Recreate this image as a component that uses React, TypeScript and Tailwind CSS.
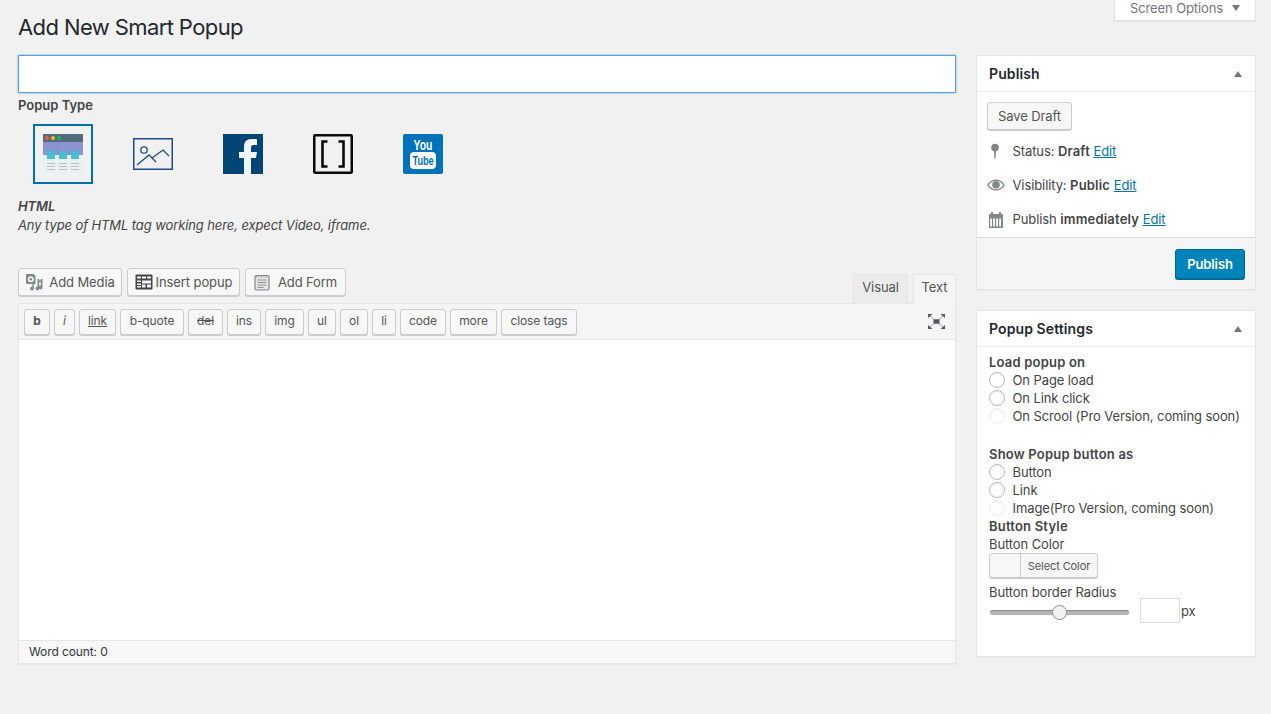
import React from "react";

const Btn = ({ children, className = "" }: { children: React.ReactNode; className?: string }) => (
  <button className={"flex items-center justify-center rounded-[3px] border border-[#cccccc] bg-[#f7f7f7] text-[#555555] shadow-[0_1px_0_#cccccc] " + className}>
    {children}
  </button>
);

const HtmlIcon = () => (
  <svg width="40" height="40" viewBox="0 0 40 40">
    <rect y="0" width="40" height="40" fill="#eaf1f2" />
    <rect width="40" height="8" fill="#4f6b7c" />
    <rect y="8" width="40" height="13" fill="#8a92cf" />
    <circle cx="4" cy="4" r="2" fill="#ee5f50" />
    <circle cx="10" cy="4" r="2" fill="#f5bd12" />
    <circle cx="16" cy="4" r="2" fill="#1cb868" />
    {[4, 16, 28].map((x) => (
      <g key={x}>
        <rect x={x} y="17" width="8" height="8" fill="#45bdd3" />
        <rect x={x} y="29" width="8" height="1" fill="#b9c0c4" />
        <rect x={x} y="32" width="8" height="1" fill="#b9c0c4" />
        <rect x={x} y="35" width="8" height="1" fill="#b9c0c4" />
      </g>
    ))}
  </svg>
);

const ImageIcon = () => (
  <svg width="40" height="40" viewBox="0 0 40 40" fill="none" stroke="#1f4b87">
    <rect x="0.750" y="4.750" width="38.500" height="30.500" strokeWidth="1.500" />
    <circle cx="11" cy="16" r="3.200" strokeWidth="1.300" />
    <path d="M4 31 L16 21 L23 28 M19 24 L30 16 L36 22" strokeWidth="1.300" />
  </svg>
);

const FbIcon = () => (
  <svg width="40" height="40" viewBox="0 0 40 40">
    <rect width="40" height="40" fill="#004576" />
    <path d="M21 40V24h-5v-6h5v-5c0-6 3-8 8-8 2 0 4 0 5 .3V11h-3c-2.500 0-3 1.200-3 3v4h6l-1 6h-5v16z" fill="#f1f5f8" />
  </svg>
);

const BracketIcon = () => (
  <svg width="40" height="40" viewBox="0 0 40 40" fill="none" stroke="#0a0a0a">
    <rect x="1.250" y="1.250" width="37.500" height="37.500" rx="1" strokeWidth="2.500" />
    <path d="M14.500 7.500H9.500v25h5M25.500 7.500h5v25h-5" strokeWidth="2.600" />
  </svg>
);

const YtIcon = () => (
  <svg width="40" height="40" viewBox="0 0 40 40">
    <rect width="40" height="40" rx="2" fill="#0072b9" />
    <text transform="translate(20 16) scale(0.7 1)" textAnchor="middle" fontSize="15" fontWeight="700" fontFamily="Liberation Sans, sans-serif" fill="#fff">You</text>
    <rect x="7" y="18" width="26" height="17" rx="4" fill="#fff" />
    <text transform="translate(20 31) scale(0.68 1)" textAnchor="middle" fontSize="13.500" fontWeight="700" fontFamily="Liberation Sans, sans-serif" fill="#0072b9">Tube</text>
  </svg>
);

const MediaIcon = () => (
  <svg width="18" height="18" viewBox="0 0 18 18" fill="#82878c">
    <path d="M2 1h6.500l2 2v8H2a1 1 0 0 1-1-1V2a1 1 0 0 1 1-1zM5.800 3.200a3 3 0 1 0 0 6 3 3 0 0 0 0-6z" fillRule="evenodd" />
    <circle cx="5.800" cy="6.200" r="1.300" />
    <path d="M12.500 6h1.700v1.500h1.600V6H17.500v8.500a1.900 1.900 0 1 1-1.700-1.900V9h-1.600v6.500a1.900 1.900 0 1 1-1.700-1.900z" />
    <circle cx="7" cy="15.500" r="1.900" />
    <rect x="7.400" y="11" width="1.500" height="4.500" />
  </svg>
);

const TableIcon = () => (
  <svg width="18" height="16" viewBox="0 0 18 16">
    <rect x="0.500" y="0.500" width="17" height="15" rx="1" fill="#444" />
    {[2, 7, 12].map((x) => <rect key={x} x={x} y="2.500" width="4" height="2" fill="#f7f7f7" />)}
    <rect x="2" y="6.500" width="4" height="1.500" fill="#f7f7f7" />
    <rect x="2" y="9.500" width="4" height="1.500" fill="#f7f7f7" />
    <rect x="2" y="12" width="4" height="1.500" fill="#f7f7f7" />
    <rect x="7" y="6.500" width="9" height="3" fill="#f7f7f7" />
    <rect x="7" y="10.500" width="3.500" height="3" fill="#f7f7f7" />
    <rect x="12" y="10.500" width="4" height="3" fill="#f7f7f7" />
  </svg>
);

const FormIcon = () => (
  <svg width="16" height="17" viewBox="0 0 16 17" fill="none" stroke="#82878c">
    <rect x="1" y="1.500" width="14" height="14.500" rx="1.500" fill="#e6e6e6" strokeWidth="1.200" />
    <path d="M2.500 1v2.500M5 1v2.500M7.500 1v2.500M10 1v2.500M12.500 1v2.500" strokeWidth="0.800" />
    <path d="M3.500 6h9M3.500 8.500h9M3.500 11h9M3.500 13.500h6" strokeWidth="0.900" />
  </svg>
);

const Pin = () => (
  <svg width="12" height="16" viewBox="0 0 12 16" fill="#82878c">
    <circle cx="6" cy="4.500" r="3.800" />
    <path d="M5 7h2l-.4 8.500h-1.200z" />
  </svg>
);

const Eye = () => (
  <svg width="18" height="12" viewBox="0 0 18 12" fill="#82878c">
    <path d="M9 .5C5 .5 1.800 3 .2 6 1.800 9 5 11.500 9 11.500S16.200 9 17.800 6C16.200 3 13 .5 9 .5zm0 1.200c3 0 5.600 1.800 7.200 4.300-1.600 2.500-4.200 4.300-7.200 4.300S3.400 8.500 1.800 6C3.400 3.500 6 1.700 9 1.700z" />
    <circle cx="9" cy="5.800" r="3.800" />
  </svg>
);

const Calendar = () => (
  <svg width="16" height="17" viewBox="0 0 16 17" fill="#82878c">
    <path d="M1 3h2V1h2v2h6V1h2v2h2v14H1zm1.200 4.500v8h1.800v-8zm3 0v8H7v-8zm3 0v8h1.800v-8zm3 0v8h1.800v-8z" fillRule="evenodd" />
  </svg>
);

const Expand = () => (
  <svg width="17" height="15" viewBox="0 0 17 15" fill="#50575e">
    <path d="M2 2l13 11M15 2L2 13" stroke="#a0a5aa" strokeWidth="1" />
    <rect x="5.500" y="5.300" width="6" height="4.400" />
    <path d="M0 0h4.500L0 4zM17 0h-4.500L17 4zM0 15h4.500L0 11zM17 15h-4.500L17 11z" />
  </svg>
);

const Radio = ({ label, faded }: { label: string; faded?: boolean }) => (
  <div className="flex h-[18px] items-center">
    <span className={"h-4 w-4 shrink-0 rounded-full border bg-white shadow-[inset_0_1px_2px_rgba(0,0,0,0.07)] " + (faded ? "border-[#ededed]" : "border-[#b4b9be]")} />
    <span className="ml-[7.500px] whitespace-nowrap">{label}</span>
  </div>
);

const Caret = () => <span className="h-0 w-0 border-x-[4px] border-b-[6px] border-x-transparent border-b-[#72777c]" />;

const Card = ({ title, children, className = "" }: { title: string; children: React.ReactNode; className?: string }) => (
  <div className={"border border-[#e5e5e5] bg-white shadow-[0_1px_1px_rgba(0,0,0,0.04)] " + className}>
    <div className="flex h-[36px] items-center justify-between border-b border-[#eeeeee] pl-3 pr-[13px]">
      <h2 className="text-[14px] font-semibold tracking-[0.1px] text-[#23282d]">{title}</h2>
      <Caret />
    </div>
    {children}
  </div>
);

const toolbar: [string, string, string?][] = [
  ["b", "w-[26px]", "font-bold"],
  ["i", "w-[21px]", "italic"],
  ["link", "w-[37px]", "underline"],
  ["b-quote", "w-[64px]"],
  ["del", "w-[35px]", "line-through"],
  ["ins", "w-[34px]"],
  ["img", "w-[39px]"],
  ["ul", "w-[28px]"],
  ["ol", "w-[28px]"],
  ["li", "w-[24px]"],
  ["code", "w-[46px]"],
  ["more", "w-[47px]"],
  ["close tags", "w-[76px]"],
];

export default function App() {
  return (
    <div className="flex h-[714px] w-full gap-5 overflow-hidden bg-[#f1f1f1] pl-[18px] pr-[15px] font-['Inter',sans-serif] text-[13px] leading-[18px] tracking-[-0.1px] text-[#444444]">
      <main className="w-[938px] shrink-0">
        <h1 className="flex h-[55px] items-center pb-[2px] text-[22px] font-normal tracking-[-0.6px] text-[#23282d]">Add New Smart Popup</h1>
        <div className="h-[38px] rounded-[1px] border border-[#5b9dd9] bg-white shadow-[0_0_2px_rgba(30,140,190,0.8)]" />
        <div className="mt-[3px] font-semibold tracking-[0px]">Popup Type</div>
        <div className="ml-[15px] mt-[10px] flex gap-[30px]">
          <div className="flex h-[60px] w-[60px] items-center justify-center border-2 border-[#0073aa]"><HtmlIcon /></div>
          <div className="flex h-[60px] w-[60px] items-center justify-center"><ImageIcon /></div>
          <div className="flex h-[60px] w-[60px] items-center justify-center"><FbIcon /></div>
          <div className="flex h-[60px] w-[60px] items-center justify-center"><BracketIcon /></div>
          <div className="flex h-[60px] w-[60px] items-center justify-center"><YtIcon /></div>
        </div>
        <div className="mt-[13px] font-semibold italic">HTML</div>
        <div className="mt-[1px] italic">Any type of HTML tag working here, expect Video, iframe.</div>
        <div className="mt-[34px] flex items-end justify-between">
          <div className="mb-[7px] flex gap-[5px]">
            <Btn className="h-[28px] w-[104px] gap-[6px]"><MediaIcon />Add Media</Btn>
            <Btn className="h-[28px] w-[113px] gap-[3px]"><TableIcon />Insert popup</Btn>
            <Btn className="h-[28px] w-[101px] gap-[8px]"><FormIcon />Add Form</Btn>
          </div>
          <div className="flex gap-[5px]">
            <div className="mb-[-1px] flex h-[30px] w-[55px] items-center justify-center border border-b-0 border-[#e5e5e5] bg-[#ebebeb] pb-[5px] text-[#555555]">Visual</div>
            <div className="mb-[-1px] flex h-[30px] w-[43px] items-center justify-center border border-b-0 border-[#e5e5e5] bg-[#f5f5f5] pb-[5px] text-[#555555]">Text</div>
          </div>
        </div>
        <div className="border border-[#e5e5e5] shadow-[0_1px_1px_rgba(0,0,0,0.04)]">
          <div className="flex h-[36px] items-center justify-between border-b border-[#e5e5e5] bg-[#f5f5f5] pl-[5px] pr-[10px]">
            <div className="flex gap-1">
              {toolbar.map(([label, w, style]) => (
                <Btn key={label} className={"h-[26px] pb-[1px] text-[12px] " + w + " " + (style ?? "")}>{label}</Btn>
              ))}
            </div>
            <Expand />
          </div>
          <div className="h-[300px] bg-white" />
          <div className="flex h-[23px] items-center border-t border-[#e5e5e5] bg-[#f7f7f7] pl-[10px] text-[12px] text-[#32373c]">Word count: 0</div>
        </div>
      </main>
      <aside className="w-[280px] shrink-0">
        <div className="flex justify-end">
          <div className="flex h-[21px] w-[142px] items-center justify-center gap-[9px] border border-t-0 border-[#e1e1e1] bg-white pb-[4px] text-[#72777c] shadow-[0_1px_1px_rgba(0,0,0,0.04)]">
            Screen Options
            <span className="h-0 w-0 border-x-[4px] border-t-[6px] border-x-transparent border-t-[#72777c]" />
          </div>
        </div>
        <Card title="Publish" className="mt-[34px]">
          <div className="h-[145px] px-[10px] pt-[10px]">
            <Btn className="h-[28px] w-[85px]">Save Draft</Btn>
            <div className="mt-[12px] flex h-[18px] items-center"><span className="flex w-[15px] justify-center"><Pin /></span><span className="ml-[10.500px]">Status: <b className="font-semibold tracking-[0.2px]">Draft</b> <a className="text-[#0073aa] underline">Edit</a></span></div>
            <div className="mt-[16px] flex h-[18px] items-center"><span className="flex w-[18px] justify-center"><Eye /></span><span className="ml-[7.500px]">Visibility: <b className="font-semibold tracking-[0.2px]">Public</b> <a className="text-[#0073aa] underline">Edit</a></span></div>
            <div className="mt-[16px] flex h-[18px] items-center"><span className="flex w-[18px] justify-center"><Calendar /></span><span className="ml-[7.500px]">Publish <b className="font-semibold tracking-[0.2px]">immediately</b> <a className="text-[#0073aa] underline">Edit</a></span></div>
          </div>
          <div className="flex h-[52px] items-center justify-end border-t border-[#dddddd] bg-[#f5f5f5] pr-[10px]">
            <button className="h-[30px] w-[70px] rounded-[3px] border border-[#006799] bg-[#0085ba] font-semibold text-white shadow-[0_1px_0_#006799]">Publish</button>
          </div>
        </Card>
        <Card title="Popup Settings" className="mt-[20px] h-[347px]">
          <div className="px-3 pt-[6px]">
            <div className="font-semibold tracking-[0.2px]">Load popup on</div>
            <Radio label="On Page load" />
            <Radio label="On Link click" />
            <Radio label="On Scrool (Pro Version, coming soon)" faded />
            <div className="mt-[20px] font-semibold tracking-[0.2px]">Show Popup button as</div>
            <Radio label="Button" />
            <Radio label="Link" />
            <Radio label="Image(Pro Version, coming soon)" faded />
            <div className="font-semibold tracking-[0.2px]">Button Style</div>
            <div>Button Color</div>
            <div className="flex h-[25px] w-[109px] rounded-[3px] border border-[#cccccc] bg-[#f7f7f7] text-[11px] text-[#555555] shadow-[0_1px_0_#cccccc]">
              <span className="w-[31px] border-r border-[#cccccc]" />
              <span className="flex flex-1 items-center justify-center">Select Color</span>
            </div>
            <div className="mt-[5px]">Button border Radius</div>
            <div className="mt-[-3px] flex items-center">
              <div className="relative ml-[1px] mt-[4px] h-[5px] w-[139px] rounded-full bg-[#b5b5b5] shadow-[inset_0_1px_1px_rgba(0,0,0,0.25)]">
                <span className="absolute left-[62px] top-[-5px] h-[15px] w-[15px] rounded-full border border-[#8e8e8e] bg-[#f2f2f2]" />
              </div>
              <div className="ml-[11px] h-[25px] w-[40px] border border-[#dddddd] bg-white" />
              <span className="ml-[1px]">px</span>
            </div>
          </div>
        </Card>
      </aside>
    </div>
  );
}
